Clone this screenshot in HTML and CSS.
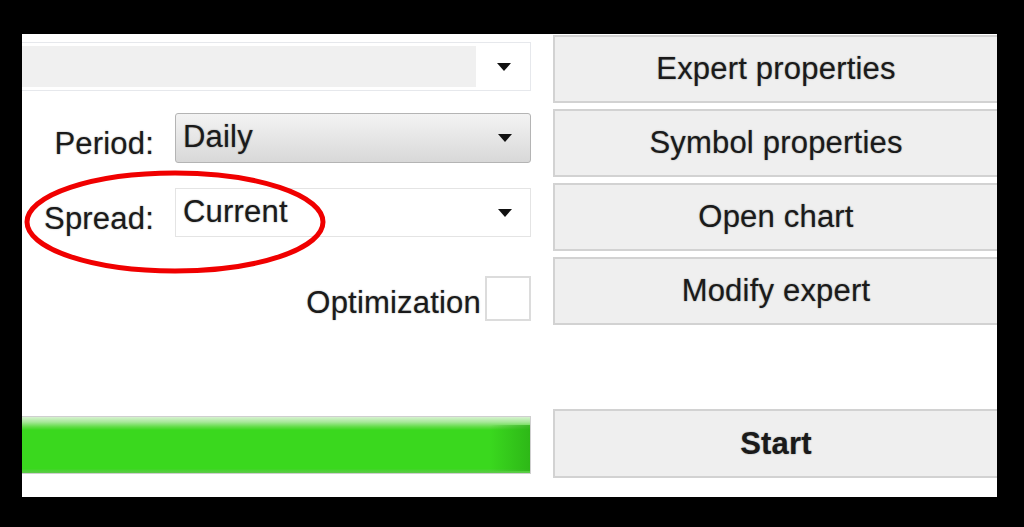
FILE: index.html
```html
<!DOCTYPE html>
<html>
<head>
<meta charset="utf-8">
<link rel="stylesheet" href="styles.css">
</head>
<body>
<div class="panel">
  <div class="left">
    <div class="combo combo-top">
      <div class="field"></div>
      <div class="arrow-box"><svg class="arrow" width="14" height="8" viewBox="0 0 14 8"><path d="M0 0H14L7 8Z"/></svg></div>
    </div>
    <div class="row row-period">
      <div class="label">Period:</div>
      <div class="combo combo-grey">
        <span class="value">Daily</span>
        <svg class="arrow" width="14" height="8" viewBox="0 0 14 8"><path d="M0 0H14L7 8Z"/></svg>
      </div>
    </div>
    <div class="row row-spread">
      <div class="label">Spread:</div>
      <div class="combo combo-white">
        <span class="value">Current</span>
        <svg class="arrow" width="14" height="8" viewBox="0 0 14 8"><path d="M0 0H14L7 8Z"/></svg>
      </div>
    </div>
    <div class="row row-opt">
      <div class="label opt-label">Optimization</div>
      <div class="checkbox"></div>
    </div>
    <div class="progress"><div class="progress-fill"></div></div>
  </div>
  <div class="right">
    <div class="btn">Expert properties</div>
    <div class="btn">Symbol properties</div>
    <div class="btn">Open chart</div>
    <div class="btn">Modify expert</div>
    <div class="btn btn-start">Start</div>
  </div>
  <svg class="circle" width="320" height="120" viewBox="0 0 320 120"><ellipse cx="153" cy="53" rx="148" ry="49" fill="none" stroke="#f00000" stroke-width="5"/></svg>
</div>
</body>
</html>
```

FILE: styles.css
```css
html, body {
  margin: 0;
  padding: 0;
  background: #000;
}
body {
  width: 1024px;
  height: 527px;
  overflow: hidden;
  font-family: "Liberation Sans", Arial, sans-serif;
  font-size: 31px;
  letter-spacing: 0.2px;
  color: #1a1a1a;
}
.panel {
  position: relative;
  margin: 34px 0 0 22px;
  width: 975px;
  height: 463px;
  background: #fff;
  display: grid;
  grid-template-columns: 509px 444px;
  column-gap: 22px;
  text-shadow: 0 0 1.5px rgba(0,0,0,0.45);
}
.left {
  display: flex;
  flex-direction: column;
}
.combo {
  box-sizing: border-box;
  display: flex;
  align-items: center;
}
.arrow { fill: #111; flex: none; }
.combo-top {
  margin-top: 8px;
  height: 49px;
  border: 1px solid #e6e8ec;
  border-left: none;
  padding: 3px 0;
  align-items: stretch;
}
.combo-top .field {
  flex: 1;
  background: #f0f0f0;
}
.combo-top .arrow-box {
  width: 52px;
  display: flex;
  align-items: center;
  justify-content: center;
  padding-left: 2px;
}
.row {
  display: flex;
  align-items: center;
}
.label {
  flex: 1;
  text-align: right;
  padding-right: 21px;
  padding-top: 12px;
}
.row-period { margin-top: 22px; }
.row-spread { margin-top: 25px; }
.combo-grey, .combo-white {
  width: 356px;
  height: 50px;
  padding: 0 18px 0 7px;
  justify-content: space-between;
}
.combo-grey {
  border: 1px solid #b4b4b4;
  border-radius: 3px;
  background: linear-gradient(#f3f3f3, #e6e6e6 50%, #d8d8d8);
}
.combo-white {
  height: 49px;
  border: 1px solid #e4e4e4;
  background: #fff;
}
.value { padding-bottom: 2px; }
.row-opt { margin-top: 38px; }
.opt-label {
  padding-right: 4px;
  padding-top: 10px;
}
.checkbox {
  box-sizing: border-box;
  width: 46px;
  height: 45px;
  border: 2px solid #dcdcdc;
  background: #fff;
}
.progress {
  box-sizing: border-box;
  margin-top: 95px;
  height: 58px;
  border: 1px solid #cfcfcf;
  border-left: none;
  background: #3ad81e;
}
.progress-fill {
  height: 100%;
  background:
    linear-gradient(#d6f2cf 0, #a8e89a 5px, #5fdc44 10px, #3ad81e 13px, #3ad81e 92%, #5fc94c 100%),
    #3ad81e;
  position: relative;
}
.progress-fill::after {
  content: "";
  position: absolute;
  right: 0;
  top: 8px;
  bottom: 2px;
  width: 40px;
  background: linear-gradient(90deg, rgba(40,170,20,0), rgba(40,170,20,0.7));
}
.right {
  display: flex;
  flex-direction: column;
  gap: 6px;
  padding-top: 1px;
}
.btn {
  box-sizing: border-box;
  height: 68px;
  background: #efefef;
  border: 2px solid #d2d2d2;
  border-right: none;
  display: flex;
  align-items: center;
  justify-content: center;
}
.btn-start {
  margin-top: 78px;
  height: 69px;
  font-weight: bold;
}
.circle {
  position: absolute;
  left: 0;
  top: 135px;
}
```
